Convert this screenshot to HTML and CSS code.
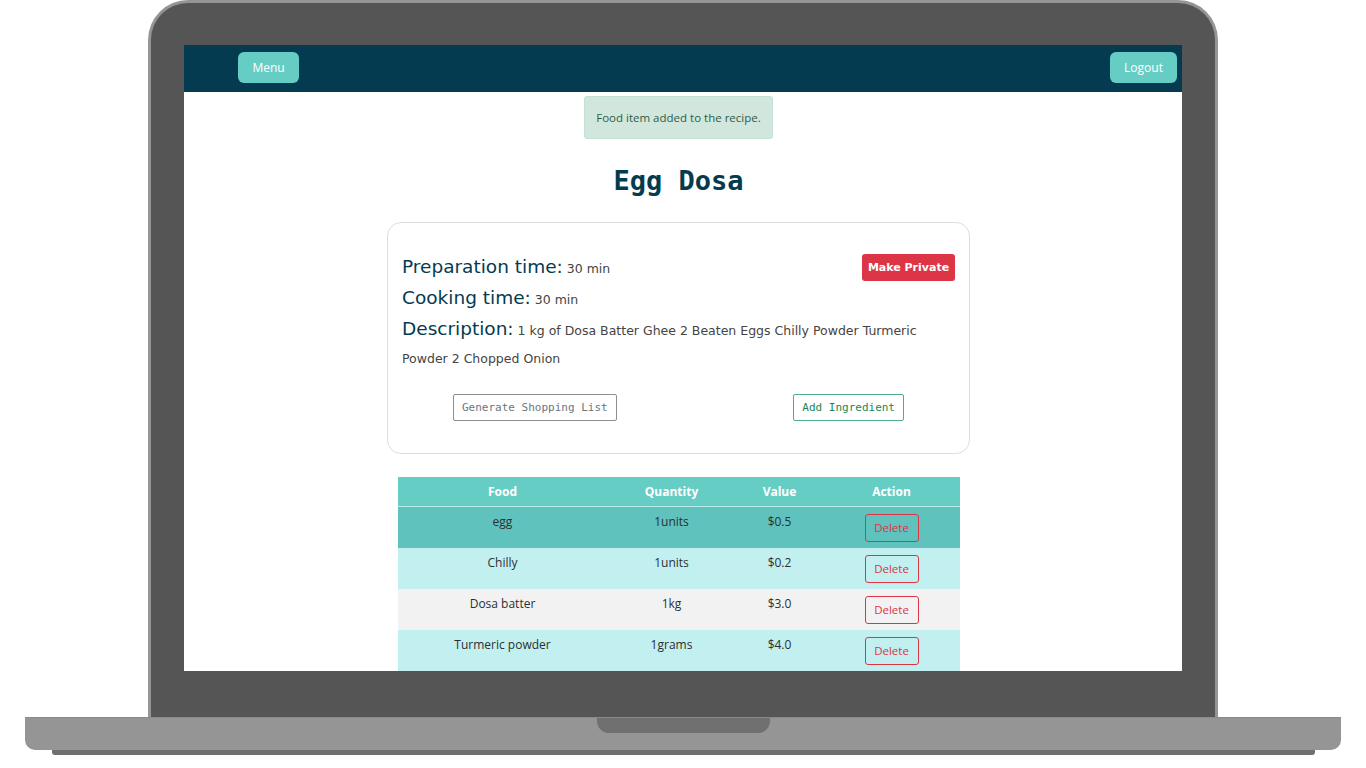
FILE: index.html
```html
<!DOCTYPE html>
<html lang="en">
<head>
<meta charset="utf-8">
<title>Egg Dosa</title>
<link rel="stylesheet" href="styles.css">
</head>
<body>
<div class="scene">
  <div class="lid">
    <div class="screen">
      <nav class="navbar">
        <button class="nav-btn btn-menu">Menu</button>
        <button class="nav-btn btn-logout">Logout</button>
      </nav>
      <main class="content">
        <div class="alert">Food item added to the recipe.</div>
        <h1 class="title">Egg Dosa</h1>
        <section class="card">
          <div class="card-top">
            <p class="line"><span class="label">Preparation time:</span> <span class="value">30 min</span></p>
            <button class="btn-private">Make Private</button>
          </div>
          <p class="line"><span class="label">Cooking time:</span> <span class="value">30 min</span></p>
          <p class="line"><span class="label">Description:</span> <span class="value">1 kg of Dosa Batter Ghee 2 Beaten Eggs Chilly Powder Turmeric Powder 2 Chopped Onion</span></p>
          <div class="card-actions">
            <button class="btn-outline btn-gray">Generate Shopping List</button>
            <button class="btn-outline btn-green">Add Ingredient</button>
          </div>
        </section>
        <table class="items">
          <thead>
            <tr><th class="c-food">Food</th><th class="c-qty">Quantity</th><th class="c-val">Value</th><th class="c-act">Action</th></tr>
          </thead>
          <tbody>
            <tr class="row-active"><td>egg</td><td>1units</td><td>$0.5</td><td><button class="btn-delete">Delete</button></td></tr>
            <tr class="row-cyan"><td>Chilly</td><td>1units</td><td>$0.2</td><td><button class="btn-delete">Delete</button></td></tr>
            <tr class="row-gray"><td>Dosa batter</td><td>1kg</td><td>$3.0</td><td><button class="btn-delete">Delete</button></td></tr>
            <tr class="row-cyan"><td>Turmeric powder</td><td>1grams</td><td>$4.0</td><td><button class="btn-delete">Delete</button></td></tr>
          </tbody>
        </table>
      </main>
    </div>
  </div>
  <div class="base"><div class="notch"></div></div>
  <div class="base-shadow"></div>
</div>
</body>
</html>
```

FILE: styles.css
```css
* { box-sizing: border-box; }
html, body { margin: 0; padding: 0; background: #ffffff; }
body { width: 1366px; height: 768px; overflow: hidden; font-family: "Open Sans", "Noto Sans", sans-serif; }

.scene { display: flex; flex-direction: column; align-items: flex-start; }

.lid {
  margin-left: 148px;
  width: 1070px;
  height: 717px;
  background: #555555;
  border: 3px solid #959595;
  border-bottom: 0;
  border-radius: 40px 40px 0 0;
  padding: 42px 33px 0 33px;
}
.screen {
  width: 998px;
  height: 626px;
  background: #ffffff;
  overflow: hidden;
}

.base {
  margin-left: 25px;
  width: 1316px;
  height: 33px;
  background: #959595;
  border-top: 1px solid #8a8a8a;
  border-radius: 0 0 10px 10px;
  display: flex;
  justify-content: center;
}
.notch {
  width: 173px;
  height: 15px;
  background: #707070;
  border-radius: 0 0 12px 12px;
}
.base-shadow {
  margin-left: 52px;
  width: 1263px;
  height: 5px;
  background: #6f6f6f;
  border-radius: 0 0 3px 3px;
}

/* navbar */
.navbar {
  height: 47px;
  background: #043b50;
  display: flex;
  justify-content: space-between;
  align-items: flex-start;
  padding: 7px 5px 0 54px;
}
.nav-btn {
  height: 31px;
  padding: 0;
  border: 0;
  border-radius: 6px;
  background: #66cdc5;
  color: #ffffff;
  font-family: "Open Sans", "Noto Sans", sans-serif;
  font-size: 12px;
}
.btn-menu { width: 61px; }
.btn-logout { width: 67px; }

/* content */
.content {
  width: 989px;
  display: flex;
  flex-direction: column;
  align-items: center;
}
.alert {
  margin-top: 4px;
  width: 189px;
  height: 43px;
  background: #d1e7dd;
  border: 1px solid #c3e2d4;
  border-radius: 3px;
  color: #2f5c48;
  font-size: 11.5px;
  display: flex;
  align-items: center;
  justify-content: center;
}
.title {
  margin: 26px 0 0;
  height: 32px;
  line-height: 32px;
  font-family: "DejaVu Sans Mono", "Liberation Mono", monospace;
  font-weight: bold;
  font-size: 27px;
  color: #043b50;
}

.card {
  margin-top: 25px;
  width: 583px;
  border: 1px solid #dedede;
  border-radius: 14px;
  padding: 32px 14px 32px 14px;
  font-family: "Comic Sans MS", "DejaVu Sans", sans-serif;
}
.card-top {
  display: flex;
  justify-content: space-between;
  align-items: flex-start;
}
.line {
  margin: 0 0 3px;
  font-size: 12.5px;
  line-height: 28px;
  color: #333333;
}
.label {
  font-size: 18.5px;
  line-height: 1;
  color: #043b50;
}
.value {
  font-size: 12.5px;
  line-height: 1;
  color: #444444;
}
.btn-private {
  margin-top: -1px;
  height: 27px;
  width: 93px;
  border: 0;
  border-radius: 3px;
  background: #dc3545;
  color: #ffffff;
  font-family: "Comic Sans MS", "DejaVu Sans", sans-serif;
  font-weight: bold;
  font-size: 11px;
  padding: 0;
}
.card-actions {
  margin-top: 21px;
  display: flex;
  justify-content: space-between;
  padding: 0 51px;
}
.btn-outline {
  height: 27px;
  padding: 0 8px;
  background: #ffffff;
  border-radius: 2px;
  font-family: "DejaVu Sans Mono", "Liberation Mono", monospace;
  font-size: 11px;
}
.btn-gray { border: 1px solid #8a8f95; color: #6c757d; }
.btn-green { border: 1px solid #4fae85; color: #198754; }

/* table */
.items {
  margin-top: 23px;
  width: 562px;
  border-collapse: collapse;
  table-layout: fixed;
  font-size: 12px;
  color: #2b2f33;
}
.c-food { width: 210px; }
.c-qty { width: 128px; }
.c-val { width: 88px; }
.c-act { width: 136px; }
.items th {
  background: #66cdc5;
  color: #ffffff;
  font-weight: bold;
  height: 29px;
  padding: 0 8px;
  line-height: 17px;
  text-align: center;
  border-bottom: 1px solid #b8ece8;
}
.items td {
  height: 41px;
  padding: 7px 8px 6px;
  line-height: 16px;
  text-align: center;
  vertical-align: top;
}
.row-active td { background: #5fc2bc; }
.row-cyan td { background: #c2efef; }
.row-gray td { background: #f2f2f2; }
.btn-delete {
  width: 54px;
  height: 28px;
  padding: 0;
  background: transparent;
  border: 1px solid #dc3545;
  border-radius: 3px;
  color: #dc3545;
  font-family: "Open Sans", "Noto Sans", sans-serif;
  font-size: 11.5px;
}
```
